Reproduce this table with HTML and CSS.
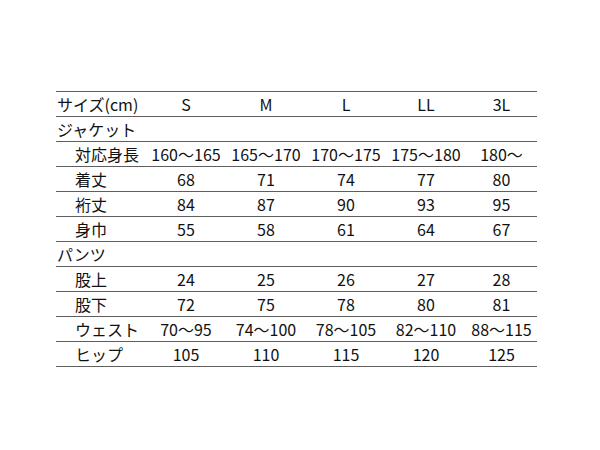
FILE: index.html
```html
<!DOCTYPE html>
<html lang="ja">
<head>
<meta charset="utf-8">
<link rel="stylesheet" href="styles.css">
</head>
<body>
<table class="size-table">
  <colgroup>
    <col class="c-label"><col class="c-size"><col class="c-size"><col class="c-size"><col class="c-size"><col class="c-last">
  </colgroup>
  <tr><td class="head">サイズ(cm)</td><td>S</td><td>M</td><td>L</td><td>LL</td><td>3L</td></tr>
  <tr><td class="head">ジャケット</td><td></td><td></td><td></td><td></td><td></td></tr>
  <tr><td class="sub">対応身長</td><td>160～165</td><td>165～170</td><td>170～175</td><td>175～180</td><td>180～</td></tr>
  <tr><td class="sub">着丈</td><td>68</td><td>71</td><td>74</td><td>77</td><td>80</td></tr>
  <tr><td class="sub">裄丈</td><td>84</td><td>87</td><td>90</td><td>93</td><td>95</td></tr>
  <tr><td class="sub">身巾</td><td>55</td><td>58</td><td>61</td><td>64</td><td>67</td></tr>
  <tr><td class="head">パンツ</td><td></td><td></td><td></td><td></td><td></td></tr>
  <tr><td class="sub">股上</td><td>24</td><td>25</td><td>26</td><td>27</td><td>28</td></tr>
  <tr><td class="sub">股下</td><td>72</td><td>75</td><td>78</td><td>80</td><td>81</td></tr>
  <tr><td class="sub">ウェスト</td><td>70～95</td><td>74～100</td><td>78～105</td><td>82～110</td><td>88～115</td></tr>
  <tr><td class="sub">ヒップ</td><td>105</td><td>110</td><td>115</td><td>120</td><td>125</td></tr>
</table>
</body>
</html>
```
FILE: styles.css
```css
html, body {
  margin: 0;
  padding: 0;
  background: #fff;
}
body {
  padding: 91px 0 0 56px;
  font-family: "Noto Sans CJK JP", "Noto Sans", sans-serif;
  font-size: 16px;
  color: #111;
}
.size-table {
  border-collapse: collapse;
  table-layout: fixed;
  width: 481px;
  border-top: 1px solid #5f5f5f;
}
.c-label { width: 90px; }
.c-size { width: 80px; }
.c-last { width: 71px; }
.size-table tr {
  border-bottom: 1px solid #5f5f5f;
}
.size-table td {
  height: 24px;
  padding: 0;
  line-height: 24px;
  text-align: center;
  white-space: nowrap;
  vertical-align: middle;
}
.size-table td.head {
  text-align: left;
  padding-left: 1px;
}
.size-table td.sub {
  text-align: left;
  padding-left: 19px;
}
```
